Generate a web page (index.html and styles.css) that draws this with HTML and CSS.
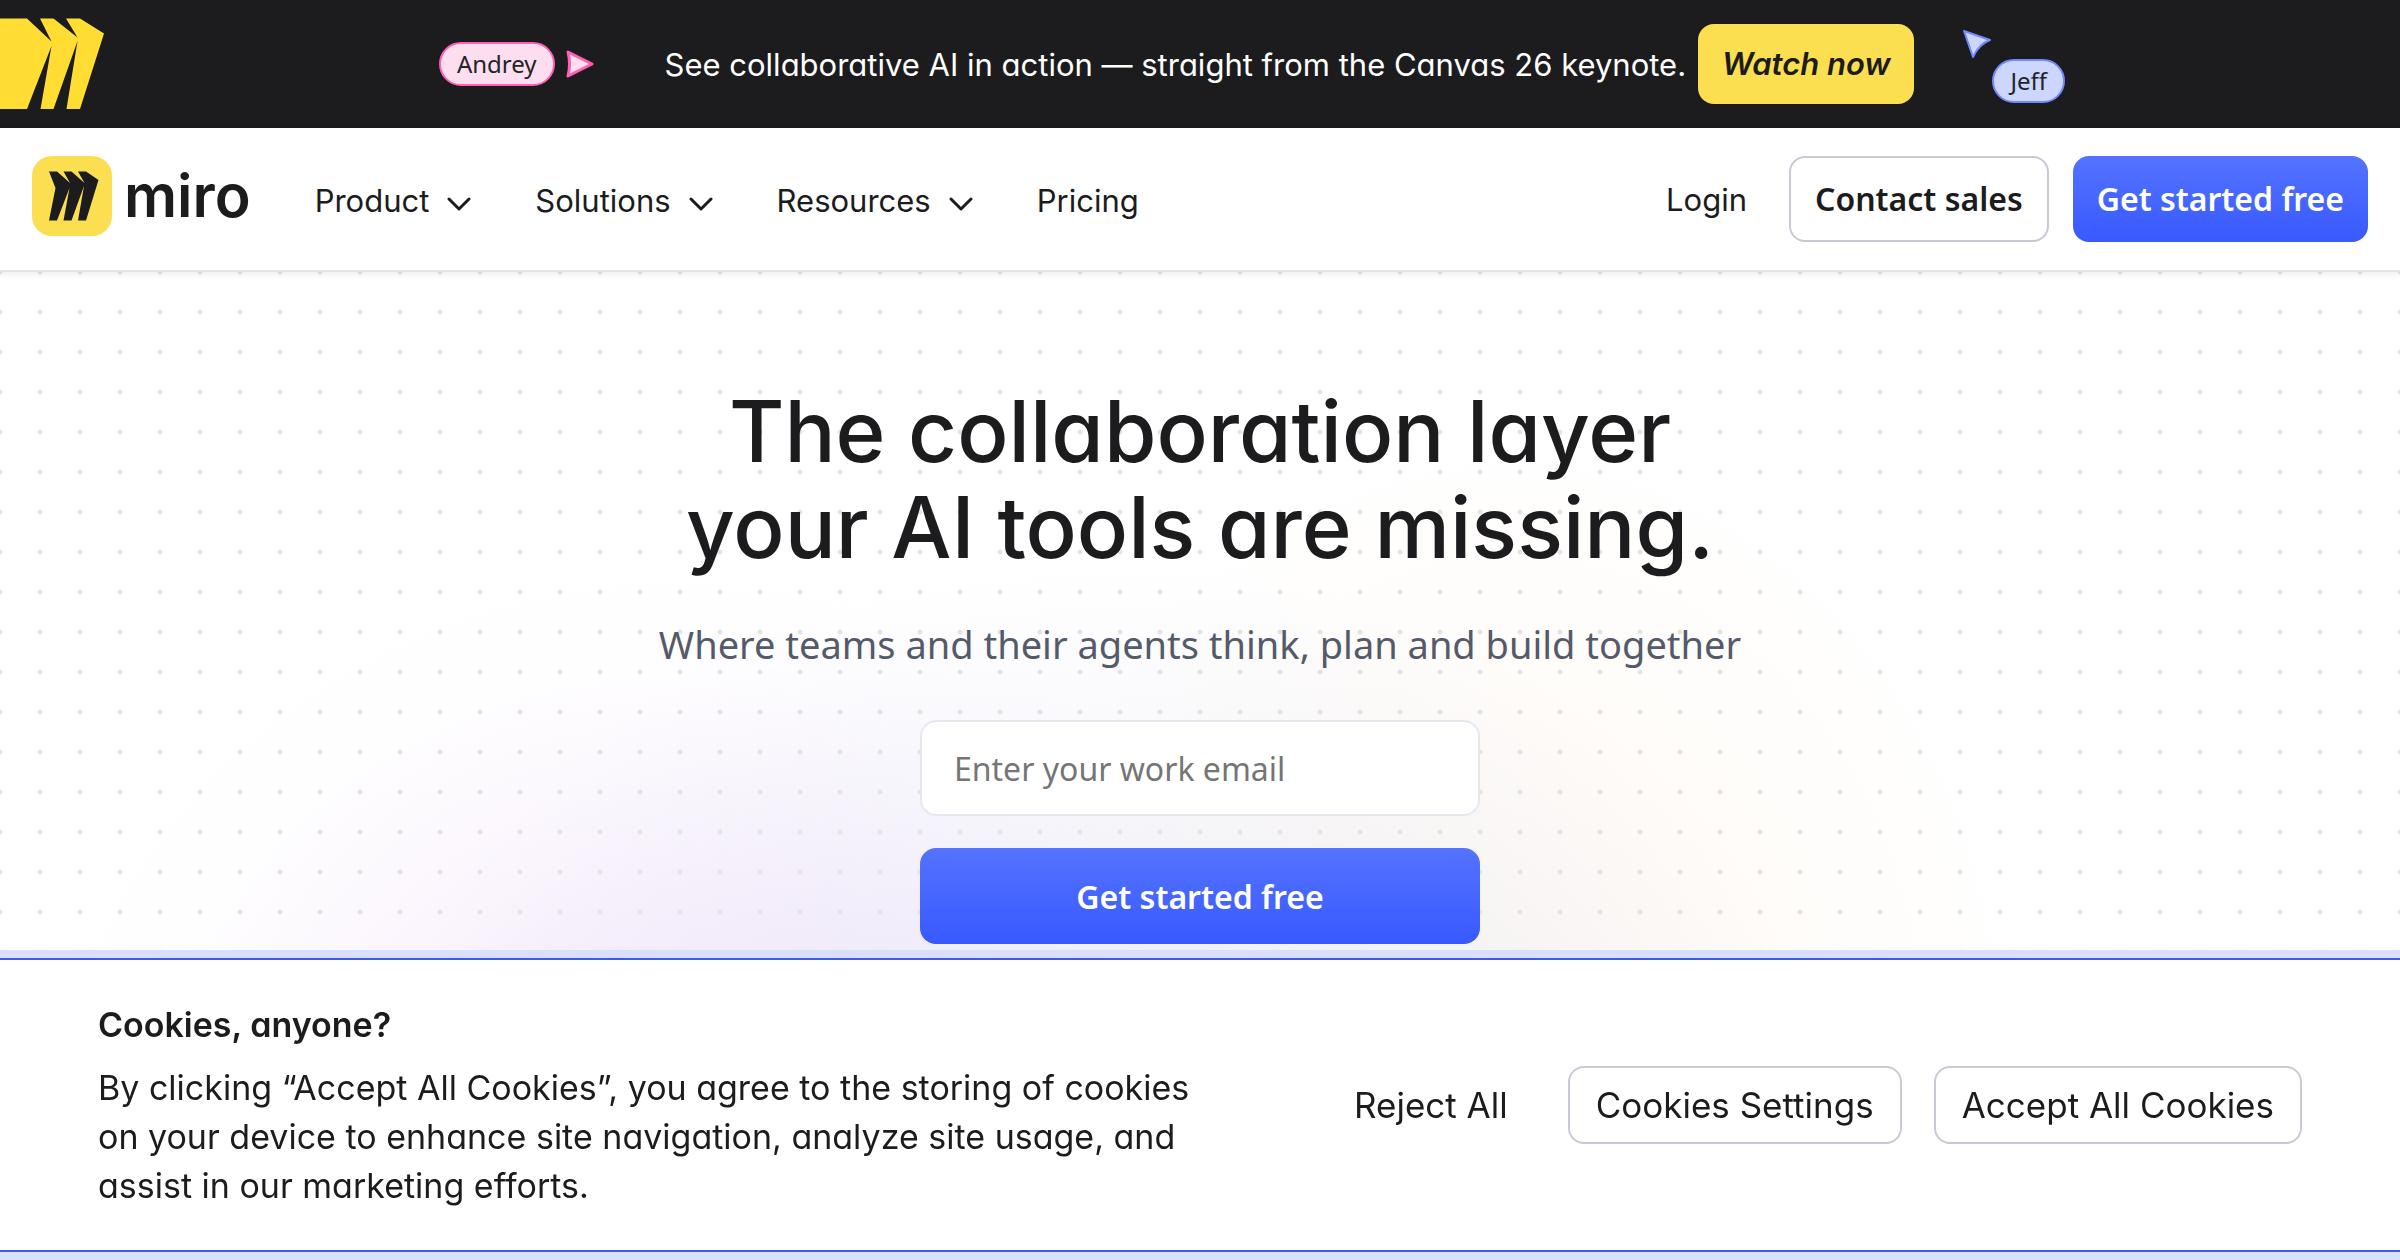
FILE: index.html
```html
<!DOCTYPE html>
<html lang="en">
<head>
  <meta charset="UTF-8" />
  <meta name="viewport" content="width=device-width, initial-scale=1.0" />
  <title>Miro</title>
  <link rel="stylesheet" href="styles.css">
</head>
<body>
  <aside class="banner">
    <svg class="banner-mark" width="104" height="128" viewBox="0 0 104 128" aria-hidden="true">
      <path d="M0 18.5H27L51.5 41.5L40 18.5H53.5L77.5 37.5L66 18.5H80L104 33.5L80 109H66.5L77.5 41L53.5 109H40.5L51.5 46L27 109H0Z" fill="#ffdd33" />
    </svg>
    <div class="banner-content">
      <div class="cursor-andrey">
        <span class="tag tag-pink">Andrey</span>
        <svg width="30" height="30" viewBox="0 0 30 30" aria-hidden="true">
          <path d="M3 3L27 15L3 27Q6 15 3 3Z" fill="#fddeee" stroke="#ff5fb5" stroke-width="3" stroke-linejoin="round" />
        </svg>
      </div>
      <p class="banner-text">See collaborative AI in action — straight from the Canvas 26 keynote.</p>
      <a class="watch" href="#">Watch now</a>
      <div class="cursor-jeff">
        <svg width="30" height="30" viewBox="0 0 30 30" aria-hidden="true">
          <path d="M2 2L28 11Q17 15 11 28Z" fill="#ccd6ff" stroke="#7189ff" stroke-width="2" stroke-linejoin="round" />
        </svg>
        <span class="tag tag-blue">Jeff</span>
      </div>
    </div>
  </aside>

  <header class="header">
    <a class="logo" href="#">
      <svg width="80" height="80" viewBox="0 0 80 80" aria-hidden="true">
        <rect width="80" height="80" rx="20" fill="#fcdf50" />
        <path d="M17 15.500H25L38 27L31.500 15.500H39.500L52.500 27L46 15.500H54L66.500 24L54 64.500H46L52 30L39.500 64.500H31.500L37.500 32L25 64.500H17L23.500 32Z" fill="#1c1c1e" />
      </svg>
      <span>miro</span>
    </a>
    <nav class="nav">
      <button type="button">Product
        <svg width="24" height="14" viewBox="0 0 24 14" aria-hidden="true"><path d="M2 2L12 12L22 2" /></svg>
      </button>
      <button type="button">Solutions
        <svg width="24" height="14" viewBox="0 0 24 14" aria-hidden="true"><path d="M2 2L12 12L22 2" /></svg>
      </button>
      <button type="button">Resources
        <svg width="24" height="14" viewBox="0 0 24 14" aria-hidden="true"><path d="M2 2L12 12L22 2" /></svg>
      </button>
      <a href="#">Pricing</a>
    </nav>
    <div class="actions">
      <a class="login" href="#">Login</a>
      <a class="btn btn-outline" href="#">Contact sales</a>
      <a class="btn btn-primary" href="#">Get started free</a>
    </div>
  </header>

  <main class="hero">
    <h1>The collaboration layer<br>your AI tools are missing.</h1>
    <p>Where teams and their agents think, plan and build together</p>
    <form class="signup">
      <input type="email" placeholder="Enter your work email" aria-label="Enter your work email" />
      <button type="submit">Get started free</button>
    </form>
  </main>

  <section class="cookies" role="dialog" aria-labelledby="cookies-title">
    <div class="cookies-text">
      <h2 id="cookies-title">Cookies, anyone?</h2>
      <p>By clicking “Accept All Cookies”, you agree to the storing of cookies on your device to enhance site navigation, analyze site usage, and assist in our marketing efforts.</p>
    </div>
    <div class="cookies-actions">
      <button type="button" class="plain">Reject All</button>
      <button type="button">Cookies Settings</button>
      <button type="button">Accept All Cookies</button>
    </div>
  </section>
</body>
</html>
```
FILE: styles.css
```css
:root {
  --ink: #1c1c1e;
  --yellow: #fcdf50;
  --blue-top: #5573ff;
  --blue: #3859ff;
  --line: #c7cad5;
  --display: Inter, "Liberation Sans", sans-serif;
  --body: "Noto Sans", "Liberation Sans", sans-serif;
}

* {
  box-sizing: border-box;
}

body {
  margin: 0;
  min-height: 100vh;
  display: flex;
  flex-direction: column;
  font-family: var(--display);
  font-feature-settings: "cv11";
  color: var(--ink);
  background: #fff;
}

h1, h2, p {
  margin: 0;
}

a {
  color: inherit;
  text-decoration: none;
}

button, input {
  font-family: inherit;
  font-feature-settings: inherit;
  color: inherit;
}

button {
  cursor: pointer;
}

/* top banner */
.banner {
  display: flex;
  height: 128px;
  background: var(--ink);
}

.banner-mark {
  flex: none;
}

.banner-content {
  flex: 1;
  display: flex;
  align-items: center;
  justify-content: center;
}

.cursor-andrey {
  display: flex;
  align-items: center;
  gap: 10px;
  margin-right: 70px;
}

.tag {
  padding: 0 16px;
  border: 2px solid;
  border-radius: 22px;
  font-family: var(--body);
  font-size: 24px;
  line-height: 40px;
  color: #222428;
}

.tag-pink {
  background: #fddeee;
  border-color: #ff5fb5;
}

.tag-blue {
  background: #ccd6ff;
  border-color: #7189ff;
}

.banner-text {
  margin-right: 12px;
  font-size: 31px;
  color: #fff;
}

.watch {
  padding: 0 24px;
  border-radius: 16px;
  background: var(--yellow);
  font-size: 31px;
  font-style: italic;
  font-weight: 600;
  line-height: 80px;
}

.cursor-jeff {
  display: flex;
  flex-direction: column;
  margin-left: 48px;
  padding-top: 4px;
}

.cursor-jeff .tag {
  margin-left: 30px;
}

/* header */
.header {
  position: relative;
  display: flex;
  align-items: flex-start;
  padding: 28px 32px 26px;
  border-bottom: 2px solid #e4e4ea;
  background: #fff;
  box-shadow: 0 2px 8px rgba(5, 0, 56, 0.08);
}

.logo {
  display: flex;
  align-items: center;
  gap: 12px;
  margin-right: 64px;
  font-size: 59px;
  font-weight: 600;
  line-height: 80px;
}

.nav {
  display: flex;
  align-items: center;
  gap: 64px;
  height: 88px;
  font-size: 31px;
}

.nav button {
  display: flex;
  align-items: center;
  gap: 18px;
  padding: 0;
  border: 0;
  background: none;
  font-size: 31px;
}

.nav svg {
  margin-top: 8px;
  fill: none;
  stroke: var(--ink);
  stroke-width: 3;
  stroke-linecap: round;
  stroke-linejoin: round;
}

.actions {
  display: flex;
  align-items: center;
  margin-left: auto;
}

.login {
  margin-right: 42px;
  font-size: 31px;
}

.btn {
  padding: 0 24px;
  border-radius: 16px;
  font-family: var(--body);
  font-size: 32px;
  font-weight: 600;
  line-height: 86px;
}

.btn-outline {
  margin-right: 24px;
  border: 2px solid var(--line);
  line-height: 82px;
}

.btn-primary {
  color: #fff;
  background: linear-gradient(var(--blue-top), var(--blue));
}

/* hero */
.hero {
  flex: 1;
  display: flex;
  flex-direction: column;
  align-items: center;
  padding: 112px 24px 316px;
  text-align: center;
  background:
    radial-gradient(circle, #e4e4e4 0 2px, transparent 3px) -20px -20px / 40px 40px,
    radial-gradient(640px 600px at 28% 90%, rgba(226, 190, 244, 0.32), rgba(226, 190, 244, 0.2) 40%, rgba(226, 190, 244, 0.04) 80%, transparent),
    radial-gradient(740px 620px at 46% 92%, rgba(196, 202, 234, 0.34), rgba(196, 202, 234, 0.2) 45%, transparent),
    radial-gradient(520px 620px at 63% 78%, rgba(252, 226, 200, 0.2), rgba(252, 226, 200, 0.12) 50%, transparent);
}

.hero h1 {
  font-size: 85px;
  font-weight: 500;
  line-height: 96px;
}

.hero p {
  margin: 40px 0 48px;
  font-family: var(--body);
  font-size: 38px;
  line-height: 56px;
  color: #555a6a;
}

.signup {
  display: flex;
  flex-direction: column;
  gap: 32px;
  width: 100%;
  max-width: 560px;
  font-family: var(--body);
}

.signup input,
.signup button {
  height: 96px;
  border-radius: 16px;
  font-size: 32px;
}

.signup input {
  padding: 0 32px;
  border: 2px solid #e6e8f0;
  background: #fff;
}

.signup input::placeholder {
  color: #757575;
}

.signup button {
  border: 0;
  font-weight: 600;
  color: #fff;
  background: linear-gradient(var(--blue-top), var(--blue));
}

/* cookie notice */
.cookies {
  position: fixed;
  right: 0;
  bottom: 8px;
  left: 0;
  display: flex;
  align-items: center;
  justify-content: space-between;
  padding: 40px 98px;
  border: solid #4259e8;
  border-width: 2px 0;
  background: #fff;
  box-shadow: 0 0 0 8px #d9dfff;
}

.cookies-text {
  max-width: 1130px;
  font-size: 34px;
  line-height: 49px;
}

.cookies h2 {
  margin-bottom: 14px;
  font-size: 34px;
  font-weight: 600;
}

.cookies-actions {
  display: flex;
  gap: 32px;
}

.cookies-actions button {
  height: 78px;
  padding: 0 26px;
  border: 2px solid var(--line);
  border-radius: 16px;
  background: #fff;
  font-size: 35px;
}

.cookies-actions .plain {
  border-color: transparent;
}
```
